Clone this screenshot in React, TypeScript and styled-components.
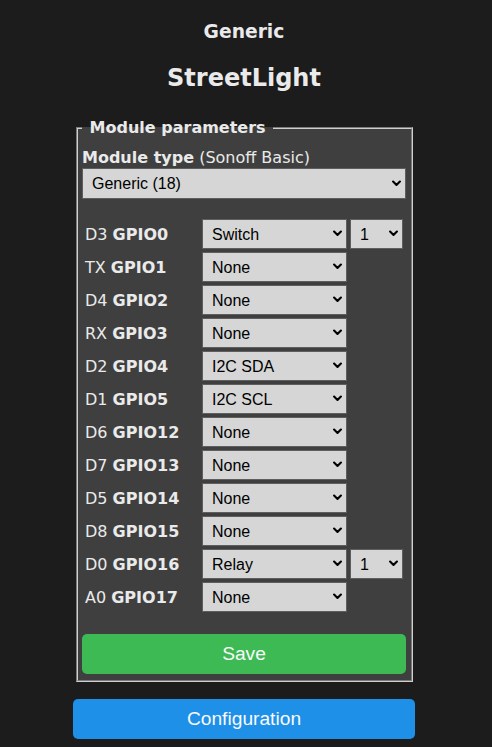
import React from "react";
import styled, { createGlobalStyle } from "styled-components";

const Global = createGlobalStyle`
  html, body { margin: 0; padding: 0; background: #1c1c1c; }
  body { font-family: "DejaVu Sans", Verdana, sans-serif; font-size: 16px; color: #eaeaea; }
`;

const Page = styled.div`
  width: 492px;
  min-height: 747px;
  box-sizing: border-box;
  padding: 0 77px 0 73px;
`;

const Header = styled.div`
  text-align: center;
  color: #eaeaea;
  padding-top: 21px;
`;

const H3 = styled.h3`
  margin: 0;
  font-size: 18.72px;
  line-height: 22px;
  font-weight: bold;
`;

const H2 = styled.h2`
  margin: 21px 0 0;
  font-size: 24px;
  line-height: 28px;
  font-weight: bold;
`;

const Fieldset = styled.fieldset`
  margin: 26px 2px 0 3px;
  padding: 11px 5px 6px 4px;
  background: #3f3f3f;
  border: 2px groove #cfcfcf;
  min-width: 0;
`;

const Legend = styled.legend`
  padding: 0 2px;
  font-weight: bold;
  line-height: 19px;
`;

const ModuleLabel = styled.div`
  line-height: 19px;
  white-space: nowrap;
  margin-bottom: 1px;
`;

const Bold = styled.b`
  font-weight: bold;
`;

const SelectWrap = styled.div<{ $w: string; $h: number }>`
  position: relative;
  width: ${(p) => p.$w};
  height: ${(p) => p.$h}px;
  flex: none;
`;

const NativeSelect = styled.select`
  appearance: none;
  -webkit-appearance: none;
  width: 100%;
  height: 100%;
  box-sizing: border-box;
  margin: 0;
  background: #d6d6d6;
  border: 1px solid #5e5e5e;
  border-radius: 0;
  color: #000;
  font-family: "Liberation Sans", Arial, sans-serif;
  font-size: 16px;
  padding: 0 22px 0 9px;
  outline: none;
`;

const Chevron = styled.svg`
  position: absolute;
  right: 5px;
  top: 50%;
  width: 9px;
  height: 7px;
  margin-top: -4px;
  pointer-events: none;
`;

function Select({ w, h, value, options }: { w: string; h: number; value: string; options?: string[] }) {
  const opts = options ?? [value];
  return (
    <SelectWrap $w={w} $h={h}>
      <NativeSelect defaultValue={value}>
        {opts.map((o) => (
          <option key={o} value={o}>
            {o}
          </option>
        ))}
      </NativeSelect>
      <Chevron viewBox="0 0 9 7">
        <path d="M1.1 1.5 L4.5 4.9 L7.9 1.5" fill="none" stroke="#000" strokeWidth="2.1" strokeLinecap="round" strokeLinejoin="round" />
      </Chevron>
    </SelectWrap>
  );
}

const Rows = styled.div`
  margin-top: 20px;
  display: flex;
  flex-direction: column;
  gap: 3px;
`;

const Row = styled.div`
  display: flex;
  align-items: center;
  height: 30px;
`;

const PinLabel = styled.div`
  width: 120px;
  padding-left: 3px;
  box-sizing: border-box;
  flex: none;
  white-space: nowrap;
`;

const Gap = styled.div`
  width: 3px;
  flex: none;
`;

const Button = styled.button<{ $bg: string }>`
  display: block;
  width: 100%;
  height: 40px;
  border: 0;
  border-radius: 5px;
  background: ${(p) => p.$bg};
  color: #fafafa;
  font-family: "Liberation Sans", Arial, sans-serif;
  font-size: 19.2px;
  padding: 0;
  cursor: pointer;
`;

const SaveWrap = styled.div`
  margin-top: 22px;
`;

const ConfigWrap = styled.div`
  margin-top: 17px;
`;

const pins: { pin: string; gpio: string; fn: string; idx?: string }[] = [
  { pin: "D3", gpio: "GPIO0", fn: "Switch", idx: "1" },
  { pin: "TX", gpio: "GPIO1", fn: "None" },
  { pin: "D4", gpio: "GPIO2", fn: "None" },
  { pin: "RX", gpio: "GPIO3", fn: "None" },
  { pin: "D2", gpio: "GPIO4", fn: "I2C SDA" },
  { pin: "D1", gpio: "GPIO5", fn: "I2C SCL" },
  { pin: "D6", gpio: "GPIO12", fn: "None" },
  { pin: "D7", gpio: "GPIO13", fn: "None" },
  { pin: "D5", gpio: "GPIO14", fn: "None" },
  { pin: "D8", gpio: "GPIO15", fn: "None" },
  { pin: "D0", gpio: "GPIO16", fn: "Relay", idx: "1" },
  { pin: "A0", gpio: "GPIO17", fn: "None" },
];

export default function App() {
  return (
    <>
      <Global />
      <Page>
        <Header>
          <H3>Generic</H3>
          <H2>StreetLight</H2>
        </Header>
        <Fieldset>
          <Legend>
            <Bold>{"\u00a0Module parameters\u00a0"}</Bold>
          </Legend>
          <ModuleLabel>
            <Bold>Module type</Bold> (Sonoff Basic)
          </ModuleLabel>
          <Select w="100%" h={31} value="Generic (18)" options={["Generic (18)", "Sonoff Basic (1)"]} />
          <Rows>
            {pins.map((p) => (
              <Row key={p.gpio}>
                <PinLabel>
                  {p.pin} <Bold>{p.gpio}</Bold>
                </PinLabel>
                <Select w="145px" h={30} value={p.fn} options={["None", "Switch", "Relay", "I2C SDA", "I2C SCL"]} />
                {p.idx && (
                  <>
                    <Gap />
                    <Select w="53px" h={30} value={p.idx} options={["1", "2", "3", "4"]} />
                  </>
                )}
              </Row>
            ))}
          </Rows>
          <SaveWrap>
            <Button $bg="#3dba54">Save</Button>
          </SaveWrap>
        </Fieldset>
        <ConfigWrap>
          <Button $bg="#1e90e8">Configuration</Button>
        </ConfigWrap>
      </Page>
    </>
  );
}
